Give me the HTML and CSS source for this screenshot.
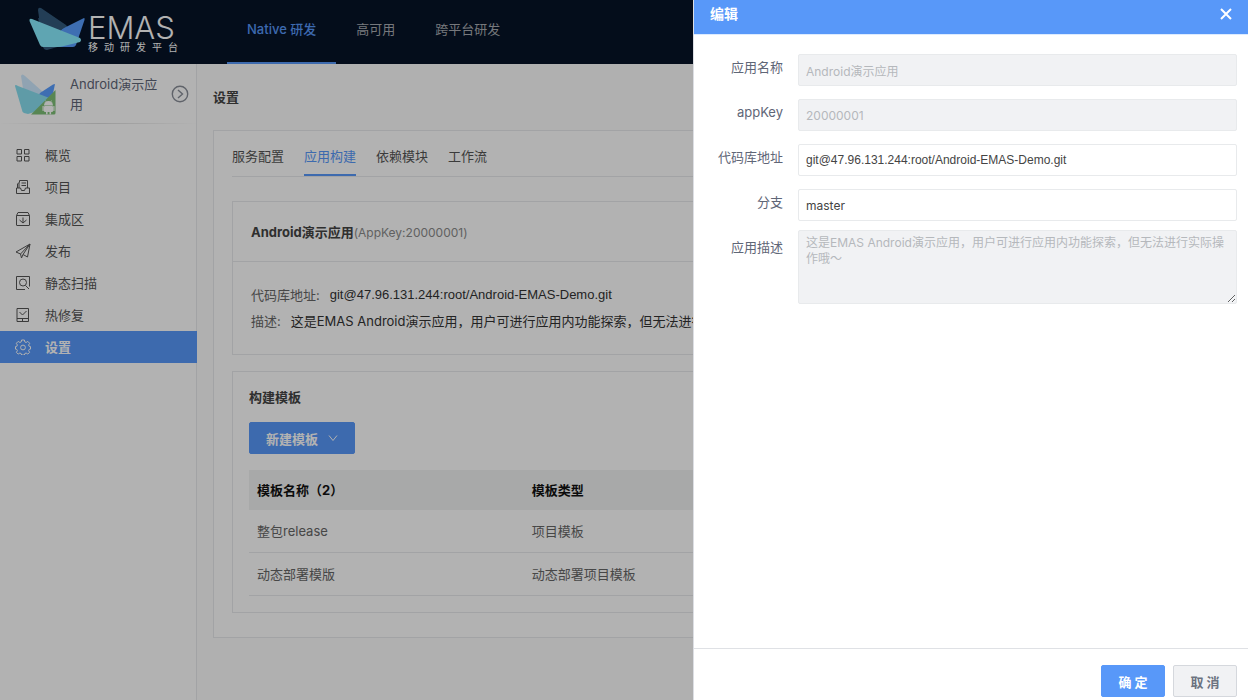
FILE: index.html
```html
<!DOCTYPE html>
<html lang="zh-CN">
<head>
<meta charset="utf-8">
<title>EMAS 移动研发平台</title>
<link rel="stylesheet" href="styles.css">
</head>
<body>
<div class="app">
  <header class="topbar">
    <a class="brand" href="#">
      <svg class="brand-mark" viewBox="29 7 57 44" aria-hidden="true">
        <path d="M38 10Q38 7 41 8L66 25L78 41L47 50Q44 50 43 47Z" fill="#335a7c"/>
        <path d="M84 18Q85 18 84.500 20L76 45Q75 47 73 47H49L62 29Z" fill="#5a9eff"/>
        <path d="M38 18L66 26L60 31L40 26Z" fill="#335a7c"/>
        <path d="M29.500 21Q29 18 32 19L80 38Q82 40 80 42L64 46Q61 47 57 47H43Q41 47 40 45Z" fill="#89edff"/>
      </svg>
      <span class="brand-text">
        <span class="brand-name">EMAS</span>
        <span class="brand-sub">移动研发平台</span>
      </span>
    </a>
    <nav class="topnav">
      <a class="topnav-item is-active" href="#">Native 研发</a>
      <a class="topnav-item" href="#">高可用</a>
      <a class="topnav-item" href="#">跨平台研发</a>
    </nav>
  </header>
  <div class="body">
    <aside class="sidebar">
      <div class="current-app">
        <svg class="app-logo" viewBox="15 74 41 42" aria-hidden="true">
          <path d="M21 76Q22 73 25 76L43 92L33 110L27 113Z" fill="#ceeaff"/>
          <path d="M55 84L50 108L30 110L40 93L53 84.500Z" fill="#5a9eff"/>
          <path d="M15 86Q15 84 18 86L52 99L47 108L28 114L24 113Q22 112 22 110Z" fill="#89dff0"/>
          <path d="M55.500 90V113Q55.500 114.500 54 114.500H31Z" fill="#7fc078"/>
          <g fill="#fff">
            <path d="M44 105.500a4.500 4.500 0 0 1 9 0z"/>
            <rect x="44" y="106" width="9" height="6" rx="1"/>
            <rect x="42.500" y="106" width="1.200" height="5" rx=".6"/>
            <rect x="53.300" y="106" width="1.200" height="5" rx=".6"/>
            <rect x="46" y="111" width="1.600" height="3.500" rx=".8"/>
            <rect x="49.500" y="111" width="1.600" height="3.500" rx=".8"/>
          </g>
          <path d="M45.500 100.500l1 2M51.500 100.500l-1 2" stroke="#fff" stroke-width=".7"/>
        </svg>
        <span class="app-name">Android演示应用</span>
        <button class="app-switch" type="button" aria-label="切换应用">
          <svg viewBox="0 0 18 18" class="line-icon"><circle cx="9" cy="9" r="7.700"/><path d="M7 5l4.500 4L7 13"/></svg>
        </button>
      </div>
      <nav class="menu">
        <a class="menu-item" href="#"><svg class="line-icon" viewBox="0 0 16 16"><path d="M2 2.500h4.500V7H2zM9.500 2.500H14V7H9.500zM2 9.500h4.500V14H2zM9.500 9.500H14V14H9.500z"/></svg>概览</a>
        <a class="menu-item" href="#"><svg class="line-icon" viewBox="0 0 16 16"><path d="M2.500 9V5L4 3.500V9M4.500 3.500v-2h8V9M6.500 4h4.500M6.500 6.500h4.500M1.500 9h4l1 2.500h3l1-2.500h4v5.500h-13z"/></svg>项目</a>
        <a class="menu-item" href="#"><svg class="line-icon" viewBox="0 0 16 16"><path d="M1.500 4.500V14q0 .5.500.500h12q.5 0 .5-.500V4.500zL3 1.500h10l1.500 3M8 6.500V12M4.500 9l3.500 3 3.500-3"/></svg>集成区</a>
        <a class="menu-item" href="#"><svg class="line-icon" viewBox="0 0 16 16"><path d="M15 1L1 9l4.500 2zL12.500 14 8 11.500 6.500 15 5.500 11M15 1L8 11.500"/></svg>发布</a>
        <a class="menu-item" href="#"><svg class="line-icon" viewBox="0 0 16 16"><path d="M10 14.500H1.500v-13h13v10M10.500 10.500l3.500 3.500"/><circle cx="8" cy="7.500" r="3.500"/></svg>静态扫描</a>
        <a class="menu-item" href="#"><svg class="line-icon" viewBox="0 0 16 16"><path d="M2 1.500h11.500v13H2zM2 11.500h11.500M7.500 12v2M4.500 5l3 3 4-4"/></svg>热修复</a>
        <a class="menu-item is-active" href="#"><svg class="line-icon" viewBox="0 0 16 16"><path d="M6.600 1h2.800l.4 1.900 1.300.6 1.700-1.100 1.900 1.900-1.100 1.700.6 1.300 1.300.3v2.500l-1.300.3-.6 1.300 1 1.600-1.800 1.800-1.700-1.100-1.300.6-.4 1.400H6.600l-.4-1.400-1.300-.6-1.700 1.100-1.800-1.800 1-1.600-.6-1.300-1.300-.3V7.600l1.300-.3.6-1.300-1.100-1.700 1.900-1.900 1.700 1.100 1.300-.6z"/><circle cx="8" cy="8.500" r="2.400"/></svg>设置</a>
      </nav>
    </aside>
    <main class="main">
      <h1 class="page-title">设置</h1>
      <section class="panel">
        <nav class="tabs">
          <a class="tab" href="#">服务配置</a>
          <a class="tab is-active" href="#">应用构建</a>
          <a class="tab" href="#">依赖模块</a>
          <a class="tab" href="#">工作流</a>
        </nav>
        <section class="card">
          <h2 class="card-head">Android演示应用<span class="app-key">(AppKey:20000001)</span></h2>
          <dl class="info">
            <div class="info-row"><dt>代码库地址:</dt><dd class="repo">git@47.96.131.244:root/Android-EMAS-Demo.git</dd></div>
            <div class="info-row"><dt>描述:</dt><dd>这是EMAS Android演示应用，用户可进行应用内功能探索，但无法进行实际操作哦～</dd></div>
          </dl>
        </section>
        <section class="card templates">
          <h2 class="card-title">构建模板</h2>
          <button class="btn btn-primary btn-menu" type="button">新建模板
            <svg class="line-icon chevron" viewBox="0 0 10 10"><path d="M1 2.500l4 5 4-5"/></svg>
          </button>
          <table class="table">
            <thead><tr><th class="col-name">模板名称（2）</th><th>模板类型</th></tr></thead>
            <tbody>
              <tr><td>整包release</td><td>项目模板</td></tr>
              <tr><td>动态部署模版</td><td>动态部署项目模板</td></tr>
            </tbody>
          </table>
        </section>
      </section>
    </main>
  </div>
</div>
<div class="backdrop"></div>
<section class="drawer" role="dialog" aria-labelledby="drawer-title">
  <header class="drawer-head">
    <h2 class="drawer-title" id="drawer-title">编辑</h2>
    <button class="drawer-close" type="button" aria-label="关闭">
      <svg viewBox="0 0 12 12"><path d="M1 1l10 10M11 1L1 11" fill="none" stroke="#fff" stroke-width="2"/></svg>
    </button>
  </header>
  <form class="form">
    <div class="field"><label for="name">应用名称</label><input id="name" type="text" value="Android演示应用" disabled></div>
    <div class="field"><label for="key">appKey</label><input id="key" type="text" value="20000001" disabled></div>
    <div class="field"><label for="repo">代码库地址</label><input class="repo" id="repo" type="text" value="git@47.96.131.244:root/Android-EMAS-Demo.git"></div>
    <div class="field"><label for="branch">分支</label><input id="branch" type="text" value="master"></div>
    <div class="field"><label for="desc">应用描述</label><textarea id="desc" disabled>这是EMAS Android演示应用，用户可进行应用内功能探索，但无法进行实际操作哦～</textarea></div>
  </form>
  <footer class="drawer-foot">
    <button class="btn btn-primary" type="button">确 定</button>
    <button class="btn btn-plain" type="button">取 消</button>
  </footer>
</section>
</body>
</html>
```
FILE: styles.css
```css
:root {
  --blue: #5898f9;
  --line: #e9eaec;
  --sans: Inter, "Noto Sans CJK SC", sans-serif;
  --repo: "Liberation Sans", "Noto Sans CJK SC", sans-serif;
}

* { box-sizing: border-box; }

body {
  margin: 0;
  overflow: hidden;
  font: 13px/20px var(--sans);
  color: #555;
}

h1, h2, dl, dd { margin: 0; }
h1, h2 { font-size: 13px; line-height: 20px; }
a { color: inherit; text-decoration: none; }
button, input, textarea { font-family: inherit; }

.line-icon { fill: none; stroke: currentColor; stroke-width: 1; }

.app {
  display: flex;
  flex-direction: column;
  height: 100vh;
}

/* Top bar */
.topbar {
  display: flex;
  flex: none;
  height: 64px;
  background: #061327;
}
.brand {
  display: flex;
  gap: 2px;
  width: 227px;
  padding: 7px 0 0 29px;
  color: #fff;
}
.brand-mark { width: 57px; height: 44px; }
.brand-text {
  display: flex;
  flex-direction: column;
  padding-top: 8px;
}
.brand-name { font-size: 31px; line-height: 26px; font-weight: 300; }
.brand-sub { font-size: 10px; line-height: 12px; letter-spacing: 6px; white-space: nowrap; }
.topnav { display: flex; }
.topnav-item {
  padding: 19px 20px 0;
  color: #a9acb2;
  border-bottom: 2px solid transparent;
}
.topnav-item.is-active {
  color: var(--blue);
  font-weight: 500;
  border-bottom-color: var(--blue);
}

.body { display: flex; flex: 1; min-height: 0; }

/* Sidebar */
.sidebar {
  flex: none;
  width: 197px;
  border-right: 1px solid var(--line);
  background: #fff;
}
.current-app {
  display: flex;
  align-items: flex-start;
  height: 60px;
  padding: 10px 7px 0 15px;
  color: #5f6677;
  border-bottom: 1px solid;
  border-image: linear-gradient(90deg, #fff, #ddd, #fff) 1;
}
.app-logo { flex: none; width: 41px; height: 42px; }
.app-name { flex: 1; margin-left: 14px; }
.app-switch {
  flex: none;
  width: 18px;
  height: 18px;
  margin: 11px 0 0 10px;
  padding: 0;
  border: 0;
  background: none;
  color: #8a8f99;
}
.app-switch svg { display: block; stroke-width: 1.400; }
.menu { padding-top: 15px; }
.menu-item {
  display: flex;
  align-items: center;
  gap: 14px;
  height: 32px;
  padding-left: 15px;
  margin-right: -1px;
}
.menu-item svg { width: 16px; height: 16px; }
.menu-item.is-active {
  background: var(--blue);
  color: #fff;
  font-weight: 700;
}

/* Main content */
.main {
  flex: 1;
  min-width: 0;
  padding: 23px 16px 0;
  background: #fcfcfc;
}
.page-title { color: #444; }
.panel {
  margin-top: 23px;
  padding: 10px 18px 24px;
  border: 1px solid var(--line);
  background: #fff;
}
.tabs {
  display: flex;
  gap: 20px;
  height: 36px;
  border-bottom: 1px solid var(--line);
}
.tab { height: 35px; padding-top: 5px; }
.tab.is-active {
  color: var(--blue);
  border-bottom: 2px solid var(--blue);
}
.card { margin-top: 24px; border: 1px solid var(--line); }
.card-head {
  padding: 20px 18px 18px;
  border-bottom: 1px solid var(--line);
  color: #444;
}
.app-key { font-size: 12px; font-weight: 400; color: #8b8b8b; }
.info { padding: 20px 18px; line-height: 26px; }
.info-row { display: flex; gap: 10px; }
.info dt { color: #666; }
.info dd { color: #333; white-space: nowrap; }
.repo { font-family: var(--repo); }

.templates { margin-top: 16px; padding: 15px 16px 16px; }
.card-title { color: #444; }
.btn {
  min-width: 64px;
  height: 32px;
  padding: 0 16px;
  border: 1px solid var(--blue);
  border-radius: 2px;
  font-size: 13px;
  font-weight: 700;
}
.btn-primary { background: var(--blue); color: #fff; }
.btn-plain {
  border-color: #d5d8dd;
  background: #f1f2f4;
  color: #6b7280;
}
.btn-menu {
  display: flex;
  align-items: center;
  gap: 10px;
  margin: 15px 0 16px;
}
.chevron { width: 10px; height: 10px; }
.table {
  width: 100%;
  border-spacing: 0;
  table-layout: fixed;
  text-align: left;
}
.table th {
  height: 40px;
  padding: 0 8px;
  background: #f1f3f2;
  color: #111;
}
.table td {
  height: 43px;
  padding: 0 8px;
  border-bottom: 1px solid var(--line);
  color: #666;
}
.col-name { width: 29%; }

/* Edit drawer */
.backdrop { position: fixed; inset: 0; background: rgba(0, 0, 0, .3); }
.drawer {
  position: fixed;
  top: 0;
  right: 0;
  bottom: 0;
  display: flex;
  flex-direction: column;
  width: 555px;
  border-left: 1px solid #dcdee3;
  background: #fff;
}
.drawer-head {
  display: flex;
  align-items: flex-start;
  justify-content: space-between;
  height: 35px;
  padding: 4px 16px 0;
  border-bottom: 1px solid #dcebff;
  background: var(--blue);
}
.drawer-title { font-size: 14px; color: #fff; }
.drawer-close {
  height: 20px;
  padding: 4px 0;
  border: 0;
  background: none;
}
.drawer-close svg { display: block; width: 12px; height: 12px; }
.form {
  display: flex;
  flex: 1;
  flex-direction: column;
  gap: 5px;
  padding: 15px 11px 0 0;
}
.field {
  display: grid;
  grid-template-columns: 89px 1fr;
  column-gap: 15px;
  min-height: 40px;
  align-items: center;
}
.field label {
  align-self: start;
  line-height: 34px;
  text-align: right;
  color: #5f6677;
}
.field input, .field textarea {
  width: 100%;
  padding: 0 7px;
  border: 1px solid #e8eaec;
  border-radius: 2px;
  background: #fff;
  font-size: 12px;
  color: #444;
}
.field input { height: 32px; }
.field textarea {
  display: block;
  height: 74px;
  padding: 4px 7px;
  line-height: 16px;
}
.field .repo { font-family: var(--repo); }
.field :disabled { background: #f1f2f4; color: #b5b8bc; }
.drawer-foot {
  display: flex;
  justify-content: flex-end;
  gap: 8px;
  padding: 16px 11px 3px;
  border-top: 1px solid #dfe1e5;
}
```
